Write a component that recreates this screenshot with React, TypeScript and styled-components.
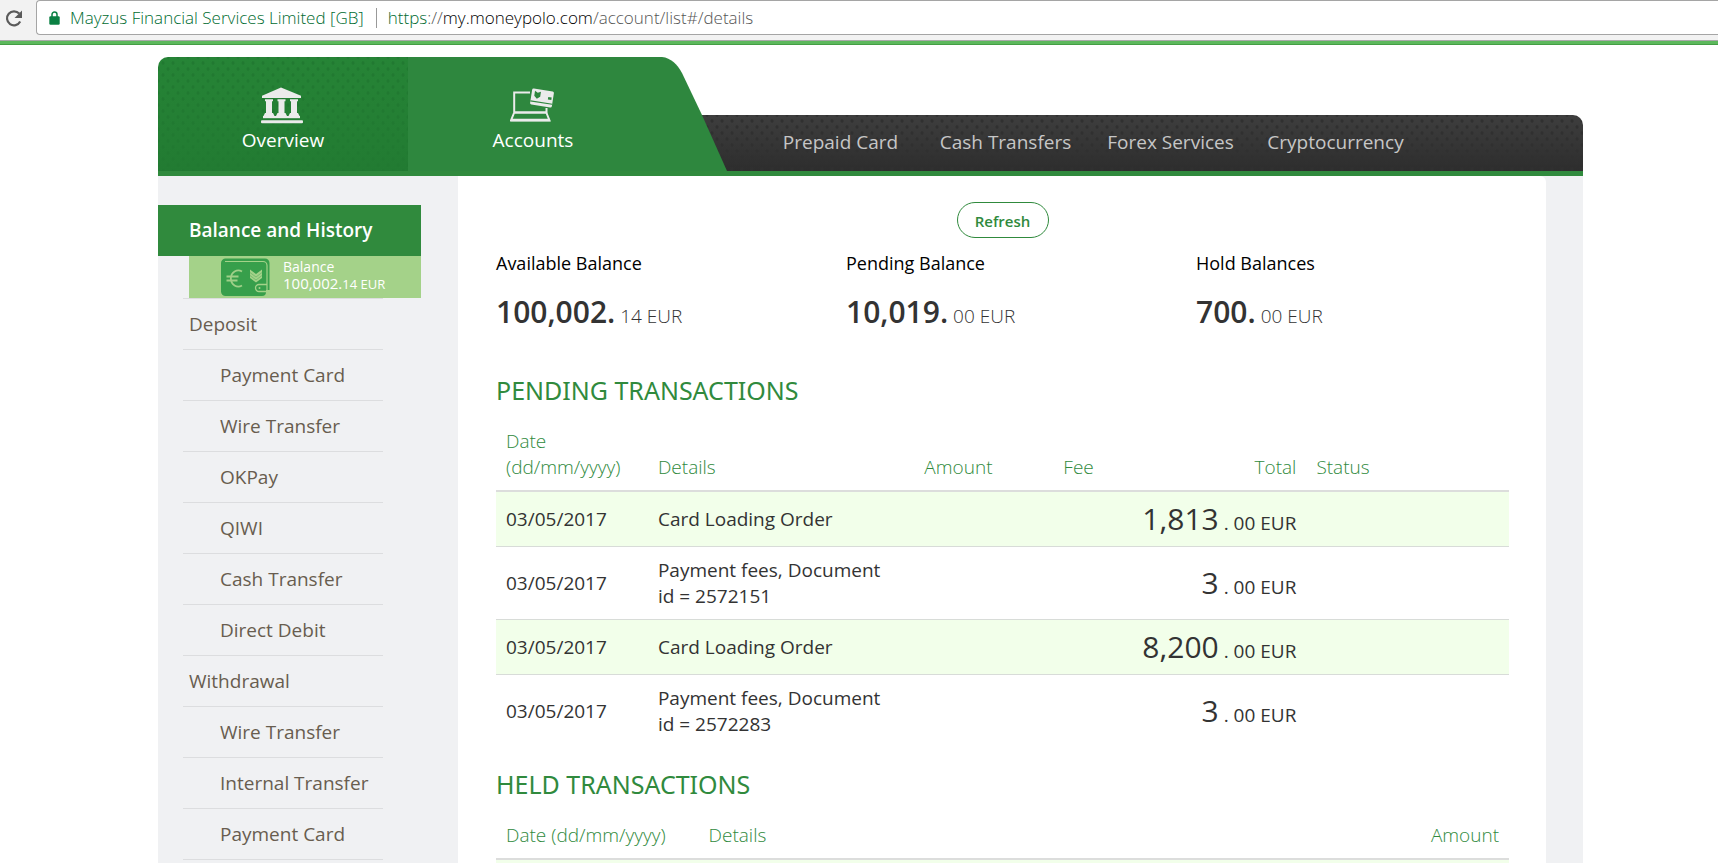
import React from "react";
import styled, { createGlobalStyle, css } from "styled-components";

const GlobalStyle = createGlobalStyle`
  *, *::before, *::after { box-sizing: border-box; }
  html, body { margin: 0; background: #fff; }
  body {
    font-family: "Open Sans", "Liberation Sans", sans-serif;
    font-size: 19px;
    color: #333;
    height: 100vh;
    overflow: hidden;
  }
  h2, p, ul { margin: 0; padding: 0; font-weight: 400; list-style: none; }
  a { color: inherit; text-decoration: none; }
`;

const dots = (dot: string, top: string, bottom: string) => css`
  background-image:
    radial-gradient(${dot} 1px, transparent 2px),
    radial-gradient(${dot} 1px, transparent 2px),
    linear-gradient(${top}, ${bottom});
  background-size: 10px 12px, 10px 12px, 100% 100%;
  background-position: 0 0, 5px 6px, 0 0;
`;

/* Browser toolbar */
const Toolbar = styled.div`
  display: flex;
  height: 41px;
  background: #f2f2f2;
  border-bottom: 1px solid #a9a9a9;
`;

const ReloadButton = styled.button`
  width: 36px;
  height: 35px;
  padding: 0 0 0 3px;
  border: 0;
  background: none;
  svg { display: block; }
`;

const AddressBar = styled.div`
  flex: 1;
  display: flex;
  align-items: center;
  height: 35px;
  padding-left: 12px;
  background: #fff;
  border: 1px solid #a5a5a5;
  border-right: 0;
  border-radius: 4px 0 0 4px;
  font-size: 17px;
  font-weight: 300;
  white-space: nowrap;
  color: #555;
`;

const SiteOwner = styled.span`
  margin-left: 10px;
  padding-right: 12px;
  margin-right: 11px;
  color: #006b30;
  border-right: 1px solid #999;
  line-height: 20px;
`;

const Scheme = styled.span`color: #006b30;`;
const Host = styled.span`color: #000;`;

const Accent = styled.div`
  height: 4px;
  background: #5cb85c;
  border-bottom: 1px solid #449d44;
`;

/* Page */
const Page = styled.div`
  padding: 12px 135px 0 158px;
`;

const Header = styled.nav`
  display: flex;
  align-items: flex-end;
  border-bottom: 5px solid #308a3d;
`;

const Tab = styled.a<{ $active?: boolean }>`
  position: relative;
  z-index: 1;
  flex: none;
  display: flex;
  flex-direction: column;
  align-items: center;
  width: 250px;
  height: 114px;
  padding-top: 30px;
  color: #fff;
  line-height: 26px;
  svg { display: block; margin: 0 2px 3px 0; }
  ${(p) =>
    p.$active
      ? css`
          width: 319px;
          padding-right: 69px;
          background: #2e873e;
          clip-path: path("M0 0H254C263 1 269 7 274 16L294 58L319 114H0Z");
        `
      : css`
          border-radius: 10px 0 0 0;
          ${dots("#217931", "#268436", "#227b32")}
        `}
`;

const MainNav = styled.ul`
  flex: 1;
  display: flex;
  height: 56px;
  margin-left: -60px;
  padding-left: 91px;
  border-radius: 0 10px 0 0;
  color: #c6c6c6;
  line-height: 54px;
  ${dots("#303030", "#3e3e3e", "#2d2d2d")}
`;

const MainNavItem = styled.li`
  flex: 0 0 165px;
  text-align: center;
`;

const Body = styled.div`
  display: flex;
  background: #f0f1f3;
  padding-right: 37px;
`;

/* Sidebar */
const Sidebar = styled.aside`
  flex: none;
  width: 300px;
  padding-top: 29px;
`;

const SidebarTitle = styled.h2`
  width: 263px;
  height: 51px;
  padding-left: 31px;
  background: #308a3d;
  color: #fff;
  font-size: 19px;
  font-weight: 600;
  line-height: 50px;
`;

const BalanceCard = styled.a`
  display: flex;
  gap: 13px;
  width: 232px;
  height: 42px;
  margin-left: 31px;
  padding: 2px 0 0 32px;
  background: #a4d289;
  color: #fff;
  font-size: 14px;
  line-height: 17px;
  p { font-weight: 500; }
`;

const BalanceAmount = styled.p`
  font-size: 15px;
  small { font-size: 13px; }
`;

const Menu = styled.ul`
  width: 200px;
  margin-left: 25px;
  border-bottom: 1px solid #dcdddf;
`;

const MenuItem = styled.li<{ $sub?: boolean }>`
  padding-left: ${(p) => (p.$sub ? 37 : 6)}px;
  border-top: 1px solid #dcdddf;
  line-height: 50px;
  color: #685d4f;
`;

/* Content */
const Content = styled.main`
  flex: 1;
  min-width: 0;
  padding: 26px 37px 0 38px;
  background: #fff;
  border-radius: 0 6px 0 0;
`;

const Refresh = styled.button`
  display: block;
  width: 92px;
  height: 36px;
  margin: 0 auto;
  padding: 2px 0 0;
  border: 1px solid #308a3d;
  border-radius: 18px;
  background: #fff;
  color: #308a3d;
  font: 600 15px "Open Sans", sans-serif;
`;

const Balances = styled.div`
  display: grid;
  grid-template-columns: repeat(3, 1fr);
  margin: 12px -37px 36px 0;
`;

const BalanceLabel = styled.p`
  font-size: 18px;
  line-height: 26px;
  color: #000;
`;

const BalanceValue = styled.p`
  margin-top: 16px;
  font-weight: 300;
  line-height: 40px;
  strong { font-size: 30px; font-weight: 600; }
`;

const SectionTitle = styled.h2`
  margin: 19px 0 10px;
  color: #308a3d;
  font-family: "Noto Sans", sans-serif;
  font-size: 25px;
  line-height: 36px;
  text-transform: uppercase;
`;

const Table = styled.table`
  width: 100%;
  table-layout: fixed;
  border-collapse: separate;
  border-spacing: 0;
`;

const Th = styled.th<{ $w: number; $right?: boolean }>`
  width: ${(p) => p.$w}%;
  padding: 10px;
  border-bottom: 2px solid #dcdddc;
  color: #308a3d;
  font-weight: 300;
  line-height: 26px;
  text-align: ${(p) => (p.$right ? "right" : "left")};
  vertical-align: bottom;
`;

const Row = styled.tr`
  &:nth-child(odd) { background: #f2ffea; }
  & + & td { border-top: 1px solid #d8dcd8; }
`;

const Td = styled.td<{ $right?: boolean }>`
  height: 54px;
  padding: ${(p) => (p.$right ? 14 : 10)}px 10px 10px;
  line-height: 26px;
  text-align: ${(p) => (p.$right ? "right" : "left")};
  big { font-size: 30px; }
`;

const ReloadIcon = () => (
  <svg width="22" height="34" viewBox="0 0 22 34" aria-hidden="true">
    <path d="M16.2 12.6A7 7 0 1 0 17.2 20.6" fill="none" stroke="#5a5a5a" strokeWidth="2.2" />
    <path d="M19 9.5V17H11.5Z" fill="#5a5a5a" />
  </svg>
);

const LockIcon = () => (
  <svg width="11" height="14" viewBox="0 0 11 14" aria-hidden="true">
    <path d="M3 6V3.5a2.5 2.5 0 0 1 5 0V6" fill="none" stroke="#0b8043" strokeWidth="1.5" />
    <rect x="0.3" y="5.3" width="10.4" height="8.5" rx="1.2" fill="#0b8043" />
  </svg>
);

const BankIcon = () => (
  <svg width="42" height="37" viewBox="0 0 42 37" fill="#ebebeb" aria-hidden="true">
    <path d="M20 0.5 40 8.8V11H1V8.8Z" />
    <path d="M4 12.2h8v2h-1V26h1l2 4H2L4 26h1V14.2H4Z" />
    <path d="M16.500 12.200h8v2h-1V26h1l2 4H14.500L16.500 26h1V14.200h-1Z" />
    <path d="M29 12.200h8v2h-1V26h1l2 4H27L29 26h1V14.200h-1Z" />
    <rect x="2" y="29" width="37" height="2.200" />
    <rect x="0" y="33.200" width="42" height="3" rx="1" />
  </svg>
);

const LaptopIcon = () => (
  <svg width="44" height="37" viewBox="0 0 44 37" aria-hidden="true">
    <path d="M20 5.500H4.200V25.500H36.500V21" fill="none" stroke="#ebebeb" strokeWidth="2" />
    <path d="M4 26 1 33.500H39.500L36.500 26" fill="none" stroke="#ebebeb" strokeWidth="2" />
    <path d="M4 25.500H37" stroke="#ebebeb" strokeWidth="2" />
    <path d="M1 33H40" stroke="#ebebeb" strokeWidth="2.600" />
    <g transform="rotate(9 32 11)">
      <rect x="21" y="3" width="22" height="16" rx="1.500" fill="#ebebeb" />
      <rect x="21" y="15" width="22" height="1.200" fill="#2e873e" />
      <path d="M24 5 27 6.500 30 5V10L27 12.500 24 10Z" fill="#2e873e" />
      <rect x="38" y="9" width="3.500" height="2.500" fill="#2e873e" />
    </g>
  </svg>
);

const WalletIcon = () => (
  <svg width="49" height="38" viewBox="0 0 49 38" aria-hidden="true">
    <path d="M5 0.500H44a4.500 4.500 0 0 1 4.500 4.500V32H45v2a4 4 0 0 1-4 4H4.500A4.500 4.500 0 0 1 0 33.500V5A4.500 4.500 0 0 1 5 0.500Z" fill="#379f4b" />
    <path d="M4 3.500H42a4 4 0 0 1 4 4V33" fill="none" stroke="#a4d289" strokeWidth="1.200" />
    <path d="M46 26.500H38a3.500 3.500 0 0 0 0 7H46" fill="none" stroke="#a4d289" strokeWidth="1.300" />
    <circle cx="38.500" cy="30" r="1" fill="#a4d289" />
    <path d="M21 13.500A7.500 8 0 1 0 21 27.500M5.500 18.500H17.500M5.500 22.500H16.500" fill="none" stroke="#9fd088" strokeWidth="1.800" />
    <path d="M29 11.500 35 16 41 11.500V20L35 24.500 29 20Z" fill="#a4d289" />
    <path d="M29 14.500 35 19 41 14.500M29 17.500 35 22 41 17.500" fill="none" stroke="#379f4b" strokeWidth="0.400" />
  </svg>
);

const menu: [string, boolean][] = [
  ["Deposit", false],
  ["Payment Card", true],
  ["Wire Transfer", true],
  ["OKPay", true],
  ["QIWI", true],
  ["Cash Transfer", true],
  ["Direct Debit", true],
  ["Withdrawal", false],
  ["Wire Transfer", true],
  ["Internal Transfer", true],
  ["Payment Card", true],
];

const balances = [
  ["Available Balance", "100,002.", "14 EUR"],
  ["Pending Balance", "10,019.", "00 EUR"],
  ["Hold Balances", "700.", "00 EUR"],
];

const pending = [
  ["03/05/2017", "Card Loading Order", "1,813"],
  ["03/05/2017", "Payment fees, Document id = 2572151", "3"],
  ["03/05/2017", "Card Loading Order", "8,200"],
  ["03/05/2017", "Payment fees, Document id = 2572283", "3"],
];

export default function App() {
  return (
    <>
      <GlobalStyle />
      <Toolbar>
        <ReloadButton aria-label="Reload"><ReloadIcon /></ReloadButton>
        <AddressBar>
          <LockIcon />
          <SiteOwner>Mayzus Financial Services Limited [GB]</SiteOwner>
          <span>
            <Scheme>https</Scheme>://<Host>my.moneypolo.com</Host>/account/list#/details
          </span>
        </AddressBar>
      </Toolbar>
      <Accent />
      <Page>
        <Header>
          <Tab href="#overview"><BankIcon />Overview</Tab>
          <Tab href="#accounts" $active><LaptopIcon />Accounts</Tab>
          <MainNav>
            {["Prepaid Card", "Cash Transfers", "Forex Services", "Cryptocurrency"].map((label) => (
              <MainNavItem key={label}><a href="#nav">{label}</a></MainNavItem>
            ))}
          </MainNav>
        </Header>
        <Body>
          <Sidebar>
            <SidebarTitle>Balance and History</SidebarTitle>
            <BalanceCard href="#balance">
              <WalletIcon />
              <div>
                <p>Balance</p>
                <BalanceAmount>100,002.<small>14 EUR</small></BalanceAmount>
              </div>
            </BalanceCard>
            <Menu>
              {menu.map(([label, sub], i) => (
                <MenuItem key={i} $sub={sub}><a href="#menu">{label}</a></MenuItem>
              ))}
            </Menu>
          </Sidebar>
          <Content>
            <Refresh>Refresh</Refresh>
            <Balances>
              {balances.map(([label, whole, rest]) => (
                <div key={label}>
                  <BalanceLabel>{label}</BalanceLabel>
                  <BalanceValue><strong>{whole}</strong> {rest}</BalanceValue>
                </div>
              ))}
            </Balances>
            <SectionTitle>Pending transactions</SectionTitle>
            <Table>
              <thead>
                <tr>
                  <Th $w={15}>Date (dd/mm/yyyy)</Th>
                  <Th $w={25}>Details</Th>
                  <Th $w={10} $right>Amount</Th>
                  <Th $w={10} $right>Fee</Th>
                  <Th $w={20} $right>Total</Th>
                  <Th $w={20}>Status</Th>
                </tr>
              </thead>
              <tbody>
                {pending.map(([date, details, total], i) => (
                  <Row key={i}>
                    <Td>{date}</Td>
                    <Td>{details}</Td>
                    <Td />
                    <Td />
                    <Td $right><big>{total}</big> . 00 EUR</Td>
                    <Td />
                  </Row>
                ))}
              </tbody>
            </Table>
            <SectionTitle>Held transactions</SectionTitle>
            <Table>
              <thead>
                <tr>
                  <Th $w={20}>Date (dd/mm/yyyy)</Th>
                  <Th $w={40}>Details</Th>
                  <Th $w={40} $right>Amount</Th>
                </tr>
              </thead>
              <tbody>
                <Row><Td /><Td /><Td /></Row>
              </tbody>
            </Table>
          </Content>
        </Body>
      </Page>
    </>
  );
}
